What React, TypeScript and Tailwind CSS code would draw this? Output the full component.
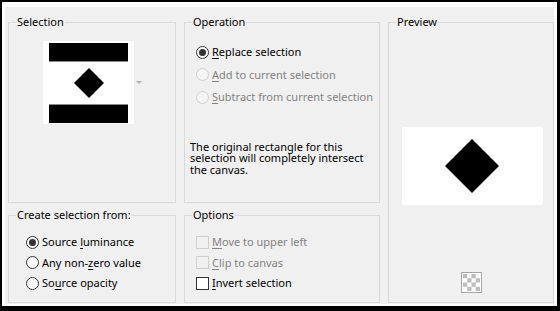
import React from 'react';

const font = { fontFamily: '"Noto Sans", "Open Sans", sans-serif' };

function Radio({ checked = false, disabled = false }: { checked?: boolean; disabled?: boolean }) {
  return (
    <span
      className={`flex h-[13px] w-[13px] shrink-0 items-center justify-center rounded-full border ${
        disabled ? 'border-[#cfcfcf] bg-[#f5f5f5]' : 'border-[#333333] bg-white'
      }`}
    >
      {checked && <span className="h-[7px] w-[7px] rounded-full bg-[#333333]" />}
    </span>
  );
}

function Check({ disabled = false }: { disabled?: boolean }) {
  return (
    <span
      className={`h-[13px] w-[13px] shrink-0 border ${
        disabled ? 'border-[#cfcfcf] bg-[#f0f0f0]' : 'border-[#333333] bg-white'
      }`}
    />
  );
}

// label with an underlined access key
function Label({ pre, k, post, disabled }: { pre: string; k: string; post: string; disabled?: boolean }) {
  return (
    <span className={`whitespace-nowrap ${disabled ? 'text-[#838383]' : 'text-black'}`}>
      {pre}
      <span className="underline underline-offset-2">{k}</span>
      {post}
    </span>
  );
}

function Group({ title, className, children }: { title: string; className: string; children?: React.ReactNode }) {
  return (
    <fieldset className={`border border-[#d9d9d9] ${className}`}>
      <legend className="ml-[7px] whitespace-nowrap px-[1px] text-[11px] leading-[14px] text-black">{title}</legend>
      {children}
    </fieldset>
  );
}

function Thumb() {
  return (
    <svg width="91" height="83" viewBox="0 0 91 83">
      <rect width="91" height="83" fill="#fff" />
      <rect x="6" y="2" width="79" height="18" fill="#000" />
      <rect x="6" y="20" width="79" height="1" fill="#8a8a8a" />
      <rect x="6" y="63" width="79" height="1" fill="#8a8a8a" />
      <rect x="6" y="64" width="79" height="18" fill="#000" />
      <polygon points="46,27 61,42 46,57 31,42" fill="#000" />
    </svg>
  );
}

function Checker() {
  const cells = [];
  for (let r = 0; r < 4; r++) {
    for (let c = 0; c < 4; c++) {
      if ((r + c) % 2 === 0) cells.push(<rect key={`${r}-${c}`} x={2 + c * 4.25} y={2 + r * 4.25} width="4.25" height="4.25" fill="#bdbdbd" />);
    }
  }
  return (
    <svg width="21" height="21" viewBox="0 0 21 21">
      <rect x="0.5" y="0.5" width="20" height="20" fill="#fff" stroke="#a8a8a8" />
      {cells}
    </svg>
  );
}

export default function App() {
  return (
    <div className="h-[311px] w-[560px] bg-black pb-[5px] pl-[2px] pr-[3px] pt-[2px]" style={font}>
      <div className="h-full w-full border-b-[2px] border-l-[3px] border-r-[3px] border-t-[5px] border-white bg-[#f0f0f0]">
        <div className="flex gap-[8px] pl-[3px] pt-[8px] text-[11px] leading-[12px]">
          {/* left column */}
          <div className="flex w-[168px] flex-col gap-[5px]">
            <Group title="Selection" className="h-[188px]">
              <div className="flex items-center pl-[34px] pt-[12px]">
                <Thumb />
                <svg width="7" height="4" viewBox="0 0 7 4" className="ml-[2px]">
                  <polygon points="0,0 6,0 3,3" fill="#b0b0b0" />
                </svg>
              </div>
            </Group>
            <Group title="Create selection from:" className="h-[95px]">
              <div className="flex flex-col pl-[17px] pt-[10px]">
                <div className="flex h-[20.5px] items-center gap-[3px]">
                  <Radio checked />
                  <Label pre="Source " k="l" post="uminance" />
                </div>
                <div className="flex h-[20.5px] items-center gap-[3px]">
                  <Radio />
                  <Label pre="Any non-" k="z" post="ero value" />
                </div>
                <div className="flex h-[20.5px] items-center gap-[3px]">
                  <Radio />
                  <Label pre="So" k="u" post="rce opacity" />
                </div>
              </div>
            </Group>
          </div>

          {/* middle column */}
          <div className="flex w-[196px] flex-col gap-[5px]">
            <Group title="Operation" className="h-[188px]">
              <div className="flex flex-col pl-[11px] pt-[12px]">
                <div className="flex h-[22.5px] items-center gap-[3px]">
                  <Radio checked />
                  <Label pre="" k="R" post="eplace selection" />
                </div>
                <div className="flex h-[22.5px] items-center gap-[3px]">
                  <Radio disabled />
                  <Label pre="" k="A" post="dd to current selection" disabled />
                </div>
                <div className="flex h-[22.5px] items-center gap-[3px]">
                  <Radio disabled />
                  <Label pre="" k="S" post="ubtract from current selection" disabled />
                </div>
              </div>
              <p className="mt-[32px] pl-[5px] pr-[12px] leading-[11.7px] text-black">
                The original rectangle for this selection will completely intersect the canvas.
              </p>
            </Group>
            <Group title="Options" className="h-[95px]">
              <div className="flex flex-col pl-[11px] pt-[10px]">
                <div className="flex h-[20.5px] items-center gap-[3px]">
                  <Check disabled />
                  <Label pre="" k="M" post="ove to upper left" disabled />
                </div>
                <div className="flex h-[20.5px] items-center gap-[3px]">
                  <Check disabled />
                  <Label pre="" k="C" post="lip to canvas" disabled />
                </div>
                <div className="flex h-[20.5px] items-center gap-[3px]">
                  <Check />
                  <Label pre="" k="I" post="nvert selection" />
                </div>
              </div>
            </Group>
          </div>

          {/* right column */}
          <Group title="Preview" className="flex h-[288px] w-[166px] flex-col items-center">
            <div className="mt-[98px] flex h-[78px] w-[141px] translate-x-[1px] items-center justify-center bg-white">
              <svg width="56" height="56" viewBox="0 0 56 56">
                <polygon points="28,1 55,28 28,55 1,28" fill="#000" />
              </svg>
            </div>
            <div className="mt-[67px]">
              <Checker />
            </div>
          </Group>
        </div>
      </div>
    </div>
  );
}
